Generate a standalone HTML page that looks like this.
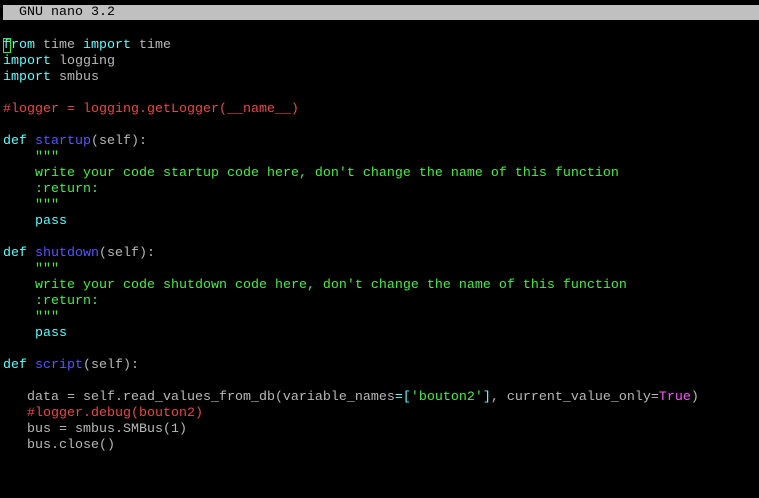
<!DOCTYPE html>
<html><head><meta charset="utf-8"><style>
html,body{margin:0;padding:0;background:#000;width:759px;height:498px;overflow:hidden}
pre{margin:0;position:absolute;left:3px;top:6px;font-family:"Liberation Mono",monospace;font-size:13.33px;line-height:16px;color:#b8b8b8;white-space:pre}
.t{background:#c0c0c0;color:#000;width:756px;display:inline-block;vertical-align:top;height:15px;margin-top:-1px;line-height:15px}
.c{color:#55ffff}.r{color:#e84848}.g{color:#44ee44}.b{color:#5555ff}.m{color:#ff55ff}
.cur{outline:1px solid #22ff22;outline-offset:-1px}
</style></head><body><pre><span class="t">  GNU nano 3.2</span>

<span class="c"><span class="cur">f</span>rom</span> time <span class="c">import</span> time
<span class="c">import</span> logging
<span class="c">import</span> smbus

<span class="r">#logger = logging.getLogger(__name__)</span>

<span class="c">def</span> <span class="b">startup</span>(self):
    <span class="g">"""</span>
    <span class="g">write your code startup code here, don't change the name of this function</span>
    <span class="g">:return:</span>
    <span class="g">"""</span>
    <span class="c">pass</span>

<span class="c">def</span> <span class="b">shutdown</span>(self):
    <span class="g">"""</span>
    <span class="g">write your code shutdown code here, don't change the name of this function</span>
    <span class="g">:return:</span>
    <span class="g">"""</span>
    <span class="c">pass</span>

<span class="c">def</span> <span class="b">script</span>(self):

   data = self.read_values_from_db(variable_names<span class="c">=[</span><span class="g">'bouton2'</span><span class="c">]</span>, current_value_only=<span class="m">True</span>)
   <span class="r">#logger.debug(bouton2)</span>
   bus = smbus.SMBus(1)
   bus.close()
</pre></body></html>
